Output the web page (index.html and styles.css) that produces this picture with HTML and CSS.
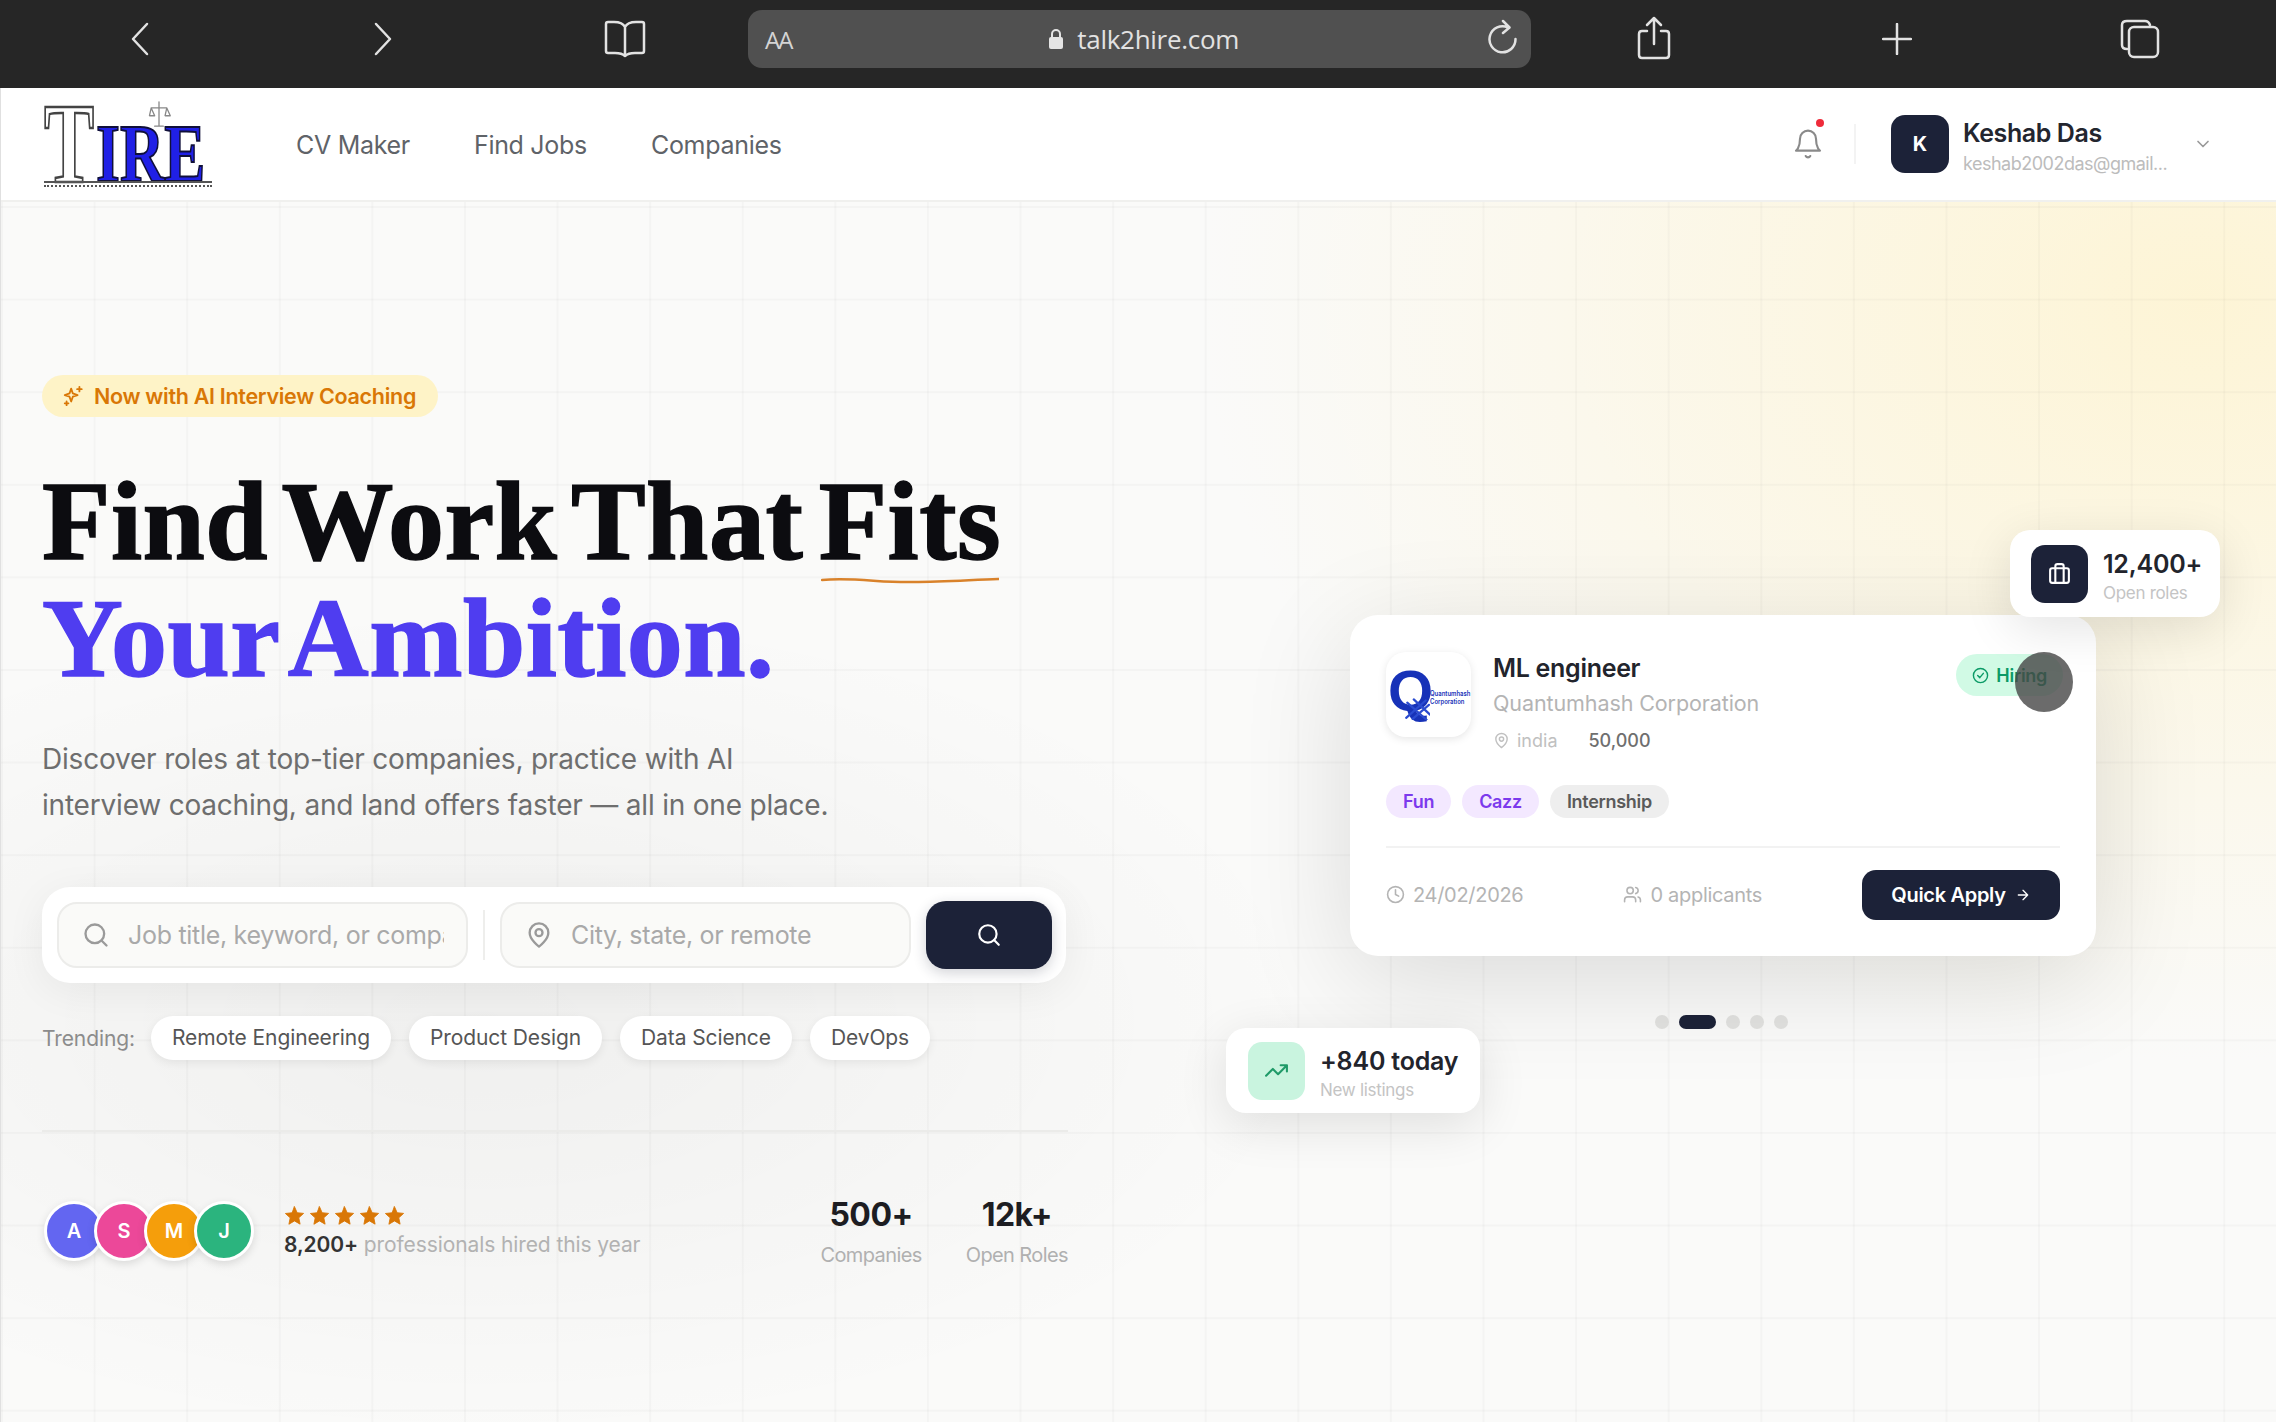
FILE: index.html
```html
<!DOCTYPE html>
<html lang="en">
<head>
    <meta charset="UTF-8">
    <meta name="viewport" content="width=device-width, initial-scale=1.0">
    <title>Talk2Hire</title>
    <link rel="stylesheet" href="styles.css">
</head>
<body>
    <!-- browser toolbar -->
    <div class="toolbar">
        <svg class="tb-icon tb-back" viewBox="0 0 20 34"><path d="M17 2 3 17l14 15"/></svg>
        <svg class="tb-icon tb-forward" viewBox="0 0 20 34"><path d="M3 2l14 15L3 32"/></svg>
        <svg class="tb-icon tb-book" viewBox="0 0 44 38"><path d="M22 7C20 3 16 2 11 2H5C3.500 2 3 3 3 4v27c0 1 .5 2 2 2h7c5 0 8 1 10 3 2-2 5-3 10-3h7c1.500 0 2-1 2-2V4c0-1-.5-2-2-2h-6c-5 0-9 1-11 5zM22 7v29"/></svg>
        <div class="address">
            <span class="aa">AA</span>
            <span class="url">
                <svg class="lock" viewBox="0 0 16 22"><path d="M4 9V6a4 4 0 0 1 8 0v3" fill="none" stroke="#e4e4e4" stroke-width="2"/><rect x="1" y="9" width="14" height="12" rx="2" fill="#e4e4e4"/></svg>
                talk2hire.com
            </span>
            <svg class="tb-icon tb-reload" viewBox="0 0 30 36"><path d="M20 8.500A13 13 0 1 0 27.500 20M15 2l6.500 6.500L15 14"/></svg>
        </div>
        <svg class="tb-icon tb-share" viewBox="0 0 36 44"><path d="M11 15H6c-2 0-3 1-3 3v21c0 2 1 3 3 3h24c2 0 3-1 3-3V18c0-2-1-3-3-3h-5M18 28V2M11 9l7-7 7 7"/></svg>
        <svg class="tb-icon tb-plus" viewBox="0 0 30 32"><path d="M15 1v30M1 16h28"/></svg>
        <svg class="tb-icon tb-tabs" viewBox="0 0 40 40"><path d="M7 30c-3 0-5-1-5-4V6c0-3 2-4 5-4h18c3 0 4 1 5 4"/><rect x="9" y="8" width="29" height="30" rx="5"/></svg>
    </div>

    <div class="page">
        <!-- nav -->
        <nav class="nav">
            <div class="logo">
                <span class="logo-t">T</span>
                <svg class="logo-scale" viewBox="0 0 24 30"><path d="M12 1v28M3 8h18M3 8l-2 9h6zM21 8l-2 9h6zM7 29h10"/></svg>
                <span class="logo-ire">IRE</span>
                <span class="logo-line"></span>
            </div>
            <div class="nav-links">
                <a>CV Maker</a>
                <a>Find Jobs</a>
                <a>Companies</a>
            </div>
            <div class="nav-right">
                <div class="bell">
                    <svg viewBox="0 0 24 24"><path d="M6 8a6 6 0 0 1 12 0c0 7 3 9 3 9H3s3-2 3-9"/><path d="M10.300 21a1.900 1.900 0 0 0 3.400 0"/></svg>
                    <span class="bell-dot"></span>
                </div>
                <span class="nav-divider"></span>
                <div class="avatar">K</div>
                <div class="user">
                    <div class="user-name">Keshab Das</div>
                    <div class="user-mail">keshab2002das@gmail...</div>
                </div>
                <svg class="chevron" viewBox="0 0 24 24"><path d="m6 9 6 6 6-6"/></svg>
            </div>
        </nav>

        <!-- hero -->
        <section class="hero">
            <div class="hero-left">
                <div class="badge">
                    <svg viewBox="0 0 24 24"><path d="M10 4l1.800 5.200L17 11l-5.200 1.800L10 18l-1.800-5.200L3 11l5.200-1.800zM19 2v5M16.500 4.500h5M5 18v4M3 20h4"/></svg>
                    Now with AI Interview Coaching
                </div>
                <h1>
                    <span class="h-line">Find Work That <span class="fits">Fits<svg viewBox="0 0 176 8" preserveAspectRatio="none"><path d="M1 4c30-3 60 3 90 2 30 0 55-2 84-3"/></svg></span></span>
                    <span class="h-line h-accent">Your Ambition.</span>
                </h1>
                <p class="lead">Discover roles at top-tier companies, practice with AI<br>interview coaching, and land offers faster — all in one place.</p>

                <div class="search">
                    <div class="field">
                        <svg viewBox="0 0 24 24"><circle cx="11" cy="11" r="8"/><path d="m21 21-4.300-4.300"/></svg>
                        <span class="placeholder">Job title, keyword, or company</span>
                    </div>
                    <span class="search-sep"></span>
                    <div class="field">
                        <svg viewBox="0 0 24 24"><path d="M20 10c0 6-8 12-8 12s-8-6-8-12a8 8 0 0 1 16 0"/><circle cx="12" cy="10" r="3"/></svg>
                        <span class="placeholder">City, state, or remote</span>
                    </div>
                    <button class="search-btn">
                        <svg viewBox="0 0 24 24"><circle cx="11" cy="11" r="8"/><path d="m21 21-4.300-4.300"/></svg>
                    </button>
                </div>

                <div class="trending">
                    <span class="trending-label">Trending:</span>
                    <span class="pill">Remote Engineering</span>
                    <span class="pill">Product Design</span>
                    <span class="pill">Data Science</span>
                    <span class="pill">DevOps</span>
                </div>

                <div class="proof">
                    <div class="avatars">
                        <span class="a-blue">A</span>
                        <span class="a-pink">S</span>
                        <span class="a-amber">M</span>
                        <span class="a-green">J</span>
                    </div>
                    <div class="hired">
                        <div class="stars">
                            <svg viewBox="0 0 24 24"><path d="M12 2l3 6.800 7.400.8-5.500 5 1.500 7.300L12 18.200 5.600 22l1.500-7.300-5.500-5 7.400-.8z"/></svg>
                            <svg viewBox="0 0 24 24"><path d="M12 2l3 6.800 7.400.8-5.500 5 1.500 7.300L12 18.200 5.600 22l1.500-7.300-5.500-5 7.400-.8z"/></svg>
                            <svg viewBox="0 0 24 24"><path d="M12 2l3 6.800 7.400.8-5.500 5 1.500 7.300L12 18.200 5.600 22l1.500-7.300-5.500-5 7.400-.8z"/></svg>
                            <svg viewBox="0 0 24 24"><path d="M12 2l3 6.800 7.400.8-5.500 5 1.500 7.300L12 18.200 5.600 22l1.500-7.300-5.500-5 7.400-.8z"/></svg>
                            <svg viewBox="0 0 24 24"><path d="M12 2l3 6.800 7.400.8-5.500 5 1.500 7.300L12 18.200 5.600 22l1.500-7.300-5.500-5 7.400-.8z"/></svg>
                        </div>
                        <div class="hired-text"><strong>8,200+</strong> professionals hired this year</div>
                    </div>
                    <div class="stat">
                        <div class="stat-num">500+</div>
                        <div class="stat-label">Companies</div>
                    </div>
                    <div class="stat">
                        <div class="stat-num">12k+</div>
                        <div class="stat-label">Open Roles</div>
                    </div>
                </div>
            </div>

            <div class="hero-right">
                <div class="stage">
                    <div class="float float-roles">
                        <div class="float-icon icon-dark">
                            <svg viewBox="0 0 24 24"><rect x="3" y="7" width="18" height="14" rx="2"/><path d="M8 21V5a2 2 0 0 1 2-2h4a2 2 0 0 1 2 2v16"/></svg>
                        </div>
                        <div class="float-text">
                            <div class="float-num">12,400+</div>
                            <div class="float-label">Open roles</div>
                        </div>
                    </div>

                    <div class="job-card">
                        <div class="job-top">
                            <div class="company-logo">
                                <span class="q">Q</span>
                                <svg class="q-mesh" viewBox="0 0 24 24"><path d="M2 22 20 6M8 23 23 10M3 8l18 16M9 5l15 14"/></svg>
                                <span class="q-name">Quantumhash<br>Corporation</span>
                            </div>
                            <div class="job-info">
                                <div class="job-title">ML engineer</div>
                                <div class="job-company">Quantumhash Corporation</div>
                                <div class="job-meta">
                                    <svg viewBox="0 0 24 24"><path d="M20 10c0 6-8 12-8 12s-8-6-8-12a8 8 0 0 1 16 0"/><circle cx="12" cy="10" r="3"/></svg>
                                    <span class="job-place">india</span>
                                    <span class="job-pay">50,000</span>
                                </div>
                            </div>
                            <div class="hiring">
                                <svg viewBox="0 0 24 24"><circle cx="12" cy="12" r="10"/><path d="m8 12 3 3 5-6"/></svg>
                                Hiring
                            </div>
                        </div>
                        <div class="tags">
                            <span class="tag tag-purple">Fun</span>
                            <span class="tag tag-purple">Cazz</span>
                            <span class="tag tag-gray">Internship</span>
                        </div>
                        <div class="job-foot">
                            <div class="foot-item foot-date">
                                <svg viewBox="0 0 24 24"><circle cx="12" cy="12" r="10"/><path d="M12 6v6l4 2"/></svg>
                                24/02/2026
                            </div>
                            <div class="foot-item foot-people">
                                <svg viewBox="0 0 24 24"><circle cx="9" cy="7" r="4"/><path d="M16 21v-2a4 4 0 0 0-4-4H6a4 4 0 0 0-4 4v2M16 3.100a4 4 0 0 1 0 7.800M22 21v-2a4 4 0 0 0-3-3.900"/></svg>
                                0 applicants
                            </div>
                            <button class="apply">Quick Apply
                                <svg viewBox="0 0 24 24"><path d="M5 12h14M12 5l7 7-7 7"/></svg>
                            </button>
                        </div>
                        <span class="touch"></span>
                    </div>

                    <div class="dots">
                        <span></span>
                        <span class="dot-on"></span>
                        <span></span>
                        <span></span>
                        <span></span>
                    </div>

                    <div class="float float-today">
                        <div class="float-icon icon-mint">
                            <svg viewBox="0 0 24 24"><path d="m22 7-8.500 8.500-5-5L2 17M16 7h6v6"/></svg>
                        </div>
                        <div class="float-text">
                            <div class="float-num">+840 today</div>
                            <div class="float-label">New listings</div>
                        </div>
                    </div>
                </div>
            </div>
        </section>
    </div>
</body>
</html>
```

FILE: styles.css
```css
* {
    margin: 0;
    padding: 0;
    box-sizing: border-box;
}

body {
    width: 2276px;
    height: 1422px;
    overflow: hidden;
    font-family: Inter, "Noto Sans", sans-serif;
    background: #fafaf8;
    color: #1c2238;
}

svg {
    display: block;
    flex: none;
    fill: none;
    stroke: currentColor;
    stroke-width: 2;
    stroke-linecap: round;
    stroke-linejoin: round;
}

/* browser toolbar */
.toolbar {
    display: flex;
    align-items: center;
    height: 88px;
    padding: 0 0 10px 130px;
    background: #262626;
    color: #e2e2e2;
}

.tb-icon {
    stroke-width: 2.5;
}

.tb-back { width: 20px; height: 34px; }
.tb-forward { width: 20px; height: 34px; margin-left: 223px; }
.tb-book { width: 44px; height: 38px; margin-left: 210px; }
.tb-share { width: 36px; height: 44px; margin-left: 105px; margin-top: -2px; }
.tb-plus { width: 30px; height: 32px; margin-left: 210px; }
.tb-tabs { width: 40px; height: 40px; margin-left: 208px; }

.address {
    display: flex;
    align-items: center;
    justify-content: space-between;
    width: 783px;
    height: 58px;
    margin-left: 101px;
    padding: 0 13px 0 17px;
    background: #505050;
    border-radius: 14px;
}

.aa {
    font-family: "Open Sans", sans-serif;
    font-size: 24px;
    letter-spacing: -2px;
    color: #d4d4d4;
}

.url {
    display: flex;
    align-items: center;
    gap: 13px;
    margin-left: 8px;
    font-family: "Open Sans", sans-serif;
    font-size: 26px;
    letter-spacing: -0.3px;
    color: #e2e2e2;
}

.lock {
    width: 16px;
    height: 22px;
    stroke: none;
}

.tb-reload { width: 30px; height: 36px; margin-top: -4px; }

/* page */
.page {
    border-left: 1px solid #e0e0e0;
}

.nav {
    display: flex;
    align-items: center;
    height: 114px;
    padding-left: 43px;
    background: #fff;
    border-bottom: 2px solid #f0f0ee;
}

.logo {
    position: relative;
    width: 168px;
    height: 86px;
}

.logo-t {
    position: absolute;
    left: 0;
    top: -14px;
    font-family: "Liberation Serif", serif;
    font-size: 114px;
    line-height: 114px;
    font-weight: 700;
    color: #fff;
    -webkit-text-stroke: 2.500px #444;
    transform: scaleX(0.66);
    transform-origin: left;
}

.logo-scale {
    position: absolute;
    left: 102px;
    top: 0;
    width: 26px;
    height: 26px;
    color: #888;
    stroke-width: 1.5;
}

.logo-ire {
    position: absolute;
    left: 52px;
    top: 12px;
    font-family: "Liberation Serif", serif;
    font-size: 82px;
    line-height: 82px;
    font-weight: 700;
    color: #2020e6;
    -webkit-text-stroke: 2px #10103a;
    transform: scaleX(0.75);
    transform-origin: left;
}

.logo-line {
    position: absolute;
    left: 0;
    right: 0;
    bottom: 0;
    height: 6px;
    border-top: 2px solid #555;
    border-bottom: 2px dotted #555;
}

.nav-links {
    display: flex;
    gap: 64px;
    margin-left: 84px;
    padding-top: 2px;
    font-size: 25px;
    font-weight: 400;
    letter-spacing: -0.3px;
    color: #5f6368;
}

.nav-right {
    display: flex;
    align-items: center;
    margin-left: auto;
    padding-right: 63px;
}

.bell {
    position: relative;
    width: 32px;
    height: 34px;
    color: #8a8a8a;
}

.bell svg {
    width: 32px;
    height: 34px;
    stroke-width: 1.6;
}

.bell-dot {
    position: absolute;
    top: -8px;
    right: 0;
    width: 8px;
    height: 8px;
    border-radius: 50%;
    background: #ef2b3a;
}

.nav-divider {
    width: 2px;
    height: 40px;
    margin: 0 35px 0 30px;
    background: #f3f3f3;
}

.avatar {
    display: flex;
    align-items: center;
    justify-content: center;
    width: 58px;
    height: 58px;
    border-radius: 14px;
    background: #1c2238;
    color: #fff;
    font-size: 20px;
    font-weight: 700;
}

.user {
    width: 210px;
    margin-left: 14px;
    padding-top: 4px;
}

.user-name {
    font-size: 25px;
    font-weight: 600;
    letter-spacing: -0.4px;
    color: #23262f;
}

.user-mail {
    margin-top: 5px;
    font-size: 18px;
    letter-spacing: -0.5px;
    color: #bcbcbc;
    white-space: nowrap;
}

.chevron {
    width: 20px;
    height: 20px;
    margin-left: 20px;
    color: #999;
}

.hero {
    display: flex;
    height: 1220px;
    overflow: hidden;
    background-color: #fafaf9;
    background-image:
        linear-gradient(rgba(0, 0, 0, 0.022) 2px, transparent 2px),
        linear-gradient(90deg, rgba(0, 0, 0, 0.022) 2px, transparent 2px),
        radial-gradient(ellipse 1000px 760px at 2200px 100px, rgba(254, 243, 205, 0.8), transparent),
        radial-gradient(ellipse 850px 420px at 480px 820px, rgba(0, 0, 0, 0.045), transparent);
    background-size: 92.6px 92.6px, 92.6px 92.6px, auto, auto;
    background-position: 0 4px, 0 0, 0 0, 0 0;
}

.hero-left {
    width: 1067px;
    padding: 173px 0 0 41px;
}

.badge {
    display: inline-flex;
    align-items: center;
    gap: 10px;
    height: 42px;
    padding: 0 22px 0 20px;
    border-radius: 21px;
    background: #fef3c7;
    color: #d97706;
    font-size: 21.500px;
    font-weight: 600;
    letter-spacing: -0.3px;
}

.badge svg {
    width: 22px;
    height: 22px;
}

h1 {
    margin-top: 46px;
    font-family: "Liberation Serif", serif;
    font-size: 112px;
    line-height: 117px;
    font-weight: 700;
    letter-spacing: 0.5px;
    word-spacing: -13px;
    color: #0c0c10;
    -webkit-text-stroke: 1.500px currentColor;
}

.h-line {
    display: block;
    white-space: nowrap;
}

.h-accent {
    color: #4f3df0;
}

.fits {
    position: relative;
}

.fits svg {
    position: absolute;
    left: 2px;
    bottom: -1px;
    width: calc(100% - 4px);
    height: 8px;
    color: #d9822b;
    stroke-width: 2.500;
}

.lead {
    margin-top: 39px;
    font-size: 28px;
    line-height: 46px;
    letter-spacing: -0.2px;
    color: #6e6e6e;
}

.search {
    display: flex;
    align-items: center;
    width: 1024px;
    height: 96px;
    margin-top: 59px;
    padding: 0 14px 0 15px;
    border-radius: 28px;
    background: #fff;
    box-shadow: 0 8px 40px rgba(0, 0, 0, 0.06);
}

.field {
    display: flex;
    align-items: center;
    flex: 1;
    min-width: 0;
    height: 66px;
    padding: 0 22px 0 23px;
    border: 2px solid #ececea;
    border-radius: 20px;
    background: #fafaf8;
    color: #9a9a9a;
}

.field svg {
    width: 28px;
    height: 28px;
}

.placeholder {
    margin-left: 18px;
    overflow: hidden;
    white-space: nowrap;
    font-size: 25px;
    letter-spacing: -0.3px;
    color: #a9a9a9;
}

.search-sep {
    width: 2px;
    height: 50px;
    margin: 0 15px;
    background: #eeeeec;
}

.search-btn {
    display: flex;
    align-items: center;
    justify-content: center;
    width: 126px;
    height: 68px;
    margin-left: 15px;
    border: none;
    border-radius: 20px;
    background: #1c2238;
    color: #fff;
    box-shadow: 0 4px 14px rgba(28, 34, 56, 0.2);
}

.search-btn svg {
    width: 26px;
    height: 26px;
}

.trending {
    display: flex;
    align-items: center;
    margin-top: 33px;
    font-size: 21px;
    letter-spacing: -0.1px;
}

.trending-label {
    width: 109px;
    color: #8c8c8c;
}

.pill {
    height: 44px;
    margin-right: 18px;
    padding: 0 21px;
    border-radius: 22px;
    background: #fff;
    color: #555;
    line-height: 44px;
    box-shadow: 0 3px 10px rgba(0, 0, 0, 0.07);
}

.proof {
    display: flex;
    align-items: center;
    width: 1026px;
    margin-top: 70px;
    padding-top: 63px;
    border-top: 2px solid #ebebe9;
}

.avatars {
    display: flex;
    padding-left: 2px;
}

.avatars span {
    display: flex;
    align-items: center;
    justify-content: center;
    width: 60px;
    height: 60px;
    margin-right: -10px;
    border: 3px solid #fff;
    border-radius: 50%;
    color: #fff;
    font-size: 20px;
    font-weight: 600;
    box-shadow: 0 3px 8px rgba(0, 0, 0, 0.12);
}

.a-blue { background: #6366f1; }
.a-pink { background: #ec4899; }
.a-amber { background: #f59e0b; }
.a-green { background: #2bb47e; }

.hired {
    margin-left: 40px;
}

.stars {
    display: flex;
    gap: 4px;
}

.stars svg {
    width: 21px;
    height: 21px;
    fill: #d97706;
    stroke: #d97706;
    stroke-width: 1;
}

.hired-text {
    margin-top: 6px;
    font-size: 21px;
    letter-spacing: -0.1px;
    color: #b2b2b2;
}

.hired-text strong {
    font-weight: 600;
    color: #333;
}

.stat {
    margin-left: 44px;
    text-align: center;
}

.hired + .stat {
    margin-left: auto;
}

.stat-num {
    font-size: 32px;
    font-weight: 700;
    letter-spacing: -0.5px;
    color: #1d1d22;
}

.stat-label {
    margin-top: 9px;
    font-size: 20px;
    letter-spacing: -0.6px;
    color: #b0b0b0;
}

/* right column */
.hero-right {
    flex: 1;
    padding: 413px 0 0 282px;
}

.stage {
    position: relative;
    width: 746px;
}

.job-card {
    position: relative;
    height: 341px;
    padding: 38px 36px 0;
    border-radius: 28px;
    background: #fff;
    box-shadow: 0 24px 110px rgba(0, 0, 0, 0.13);
}

.job-top {
    display: flex;
    align-items: flex-start;
}

.company-logo {
    position: relative;
    flex: none;
    width: 85px;
    height: 85px;
    margin-top: -1px;
    border-radius: 20px;
    background: #fff;
    box-shadow: 0 2px 8px rgba(0, 0, 0, 0.1);
}

.q {
    position: absolute;
    left: 2px;
    top: 10px;
    font-family: "Liberation Sans", sans-serif;
    font-size: 58px;
    line-height: 58px;
    font-weight: 700;
    color: #1732b8;
}

.q-mesh {
    position: absolute;
    left: 18px;
    top: 42px;
    width: 26px;
    height: 26px;
    color: #2a4bd0;
}

.q-name {
    position: absolute;
    left: 44px;
    top: 38px;
    font-size: 7px;
    line-height: 8px;
    font-weight: 600;
    white-space: nowrap;
    color: #1732b8;
    transform: scaleX(0.85);
    transform-origin: left;
}

.job-info {
    margin-left: 22px;
}

.job-title {
    font-size: 25px;
    font-weight: 600;
    letter-spacing: -0.3px;
    color: #22242c;
}

.job-company {
    margin-top: 7px;
    font-size: 21.500px;
    letter-spacing: -0.1px;
    color: #b4b4b4;
}

.job-meta {
    display: flex;
    align-items: center;
    margin-top: 14px;
    font-size: 18px;
    color: #c0c0c0;
}

.job-meta svg {
    width: 17px;
    height: 19px;
}

.job-place {
    margin-left: 7px;
}

.job-pay {
    margin-left: 31px;
    font-weight: 500;
    color: #6f6f6f;
}

.hiring {
    display: flex;
    align-items: center;
    gap: 7px;
    height: 42px;
    margin: 1px -3px 0 auto;
    padding: 0 16px;
    border-radius: 21px;
    background: #d1fae5;
    color: #0b9a66;
    font-size: 18px;
    font-weight: 600;
    letter-spacing: -0.3px;
}

.hiring svg {
    width: 17px;
    height: 17px;
}

.touch {
    position: absolute;
    left: 665px;
    top: 37px;
    width: 58px;
    height: 60px;
    border-radius: 50%;
    background: rgba(70, 70, 70, 0.8);
}

.tags {
    display: flex;
    gap: 11px;
    margin-top: 34px;
}

.tag {
    height: 33px;
    padding: 0 17px;
    border-radius: 17px;
    font-size: 18px;
    font-weight: 600;
    line-height: 33px;
    letter-spacing: -0.3px;
}

.tag-purple {
    background: #f3e8ff;
    color: #7c3aed;
}

.tag-gray {
    background: #eeeeee;
    color: #5a5a5a;
}

.job-foot {
    display: flex;
    align-items: center;
    height: 73px;
    margin-top: 28px;
    padding-top: 22px;
    border-top: 2px solid #f2f2f2;
    font-size: 20px;
    letter-spacing: -0.3px;
    color: #b4b4b4;
}

.foot-item {
    display: flex;
    align-items: center;
    gap: 8px;
}

.foot-item svg {
    width: 19px;
    height: 19px;
}

.foot-people {
    margin-left: 100px;
}

.apply {
    display: flex;
    align-items: center;
    justify-content: center;
    gap: 9px;
    width: 198px;
    height: 50px;
    margin-left: auto;
    border: none;
    border-radius: 14px;
    background: #1c2238;
    color: #fff;
    font-family: inherit;
    font-size: 20px;
    font-weight: 600;
    letter-spacing: -0.3px;
}

.apply svg {
    width: 16px;
    height: 16px;
}

.dots {
    display: flex;
    align-items: center;
    gap: 10px;
    margin-top: 59px;
    padding-left: 305px;
}

.dots span {
    width: 14px;
    height: 14px;
    border-radius: 50%;
    background: #e2e2e0;
}

.dots .dot-on {
    width: 37px;
    border-radius: 8px;
    background: #1c2238;
}

.float {
    position: absolute;
    z-index: 2;
    display: flex;
    align-items: center;
    gap: 15px;
    border-radius: 20px;
    background: #fff;
    box-shadow: 0 12px 50px rgba(0, 0, 0, 0.11);
}

.float-roles {
    left: 660px;
    top: -85px;
    width: 210px;
    height: 87px;
    padding-left: 21px;
}

.float-today {
    left: -124px;
    top: 413px;
    width: 254px;
    height: 85px;
    padding-left: 22px;
}

.float-icon {
    display: flex;
    align-items: center;
    justify-content: center;
    width: 57px;
    height: 58px;
    border-radius: 14px;
}

.float-icon svg {
    width: 25px;
    height: 25px;
}

.icon-dark {
    background: #1c2238;
    color: #fff;
}

.icon-mint {
    background: #c9f4df;
    color: #1f9a68;
}

.float-text {
    margin-top: 4px;
}

.float-num {
    font-size: 25px;
    font-weight: 600;
    letter-spacing: -0.2px;
    color: #22242c;
}

.float-label {
    margin-top: 4px;
    font-size: 17px;
    letter-spacing: -0.3px;
    color: #c4c4c4;
}
```
